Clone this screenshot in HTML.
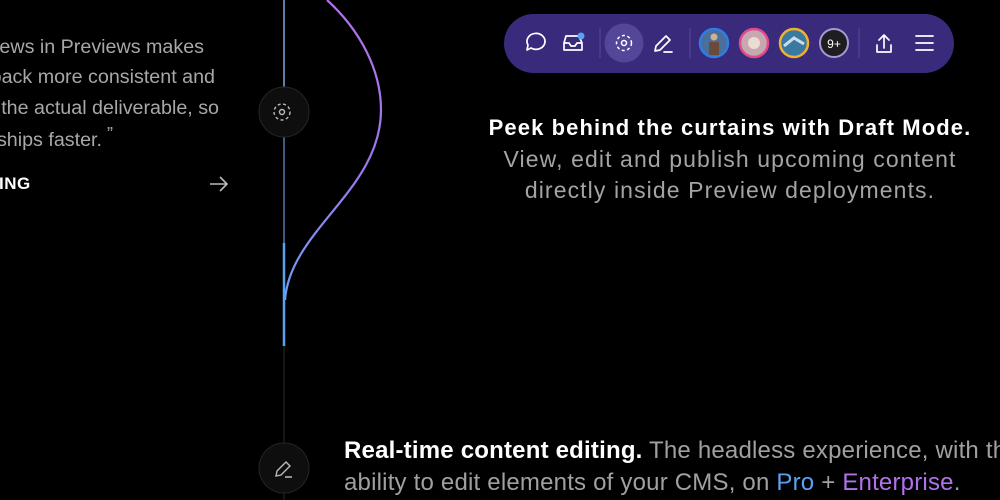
<!DOCTYPE html>
<html><head><meta charset="utf-8"><style>
*{margin:0;padding:0;box-sizing:border-box}
body{width:1000px;height:500px;background:#000;overflow:hidden;position:relative;font-family:"Liberation Sans",sans-serif}
.a{position:absolute;white-space:nowrap}
.q{color:#a8a8a8;font-size:19.7px;width:300px;text-align:right}
.c{color:#a4a4a4;font-size:23px;letter-spacing:1.1px;text-align:center;width:560px;left:450px}
.bt{left:344px;font-size:24px;color:#a0a0a0;letter-spacing:0.2px}
</style></head><body>
<div class="a q" style="left:-96px;top:36px">views in Previews makes</div>
<div class="a q" style="left:-85px;top:66px">back more consistent and</div>
<div class="a q" style="left:-81px;top:97px">the actual deliverable, so</div>
<div class="a q" style="left:-198px;top:129px">ships faster.</div>
<div class="a" style="left:107px;top:124px;color:#aaa;font-size:18px">”</div>
<div class="a" style="left:-1px;top:174px;color:#fff;font-weight:bold;font-size:17px;letter-spacing:0.5px">ING</div>
<svg class="a" style="left:0;top:0" width="1000" height="500">
<line x1="284" y1="0" x2="284" y2="500" stroke="#1c1c1c" stroke-width="1.5"/>
<line x1="284" y1="0" x2="284" y2="90" stroke="#5c7fa8" stroke-width="2"/>
<line x1="284" y1="134" x2="284" y2="245" stroke="#3d5a80" stroke-width="2"/>
<line x1="284" y1="243" x2="284" y2="346" stroke="#5aa2f0" stroke-width="2.5"/>
<defs><linearGradient id="g" x1="0" y1="0" x2="0" y2="1"><stop offset="0" stop-color="#b072ea"/><stop offset="0.6" stop-color="#9a78ee"/><stop offset="1" stop-color="#6aa0f2"/></linearGradient></defs>
<path d="M327 0 C 360 30, 381 70, 381 110 C 381 190, 290 230, 285 300" fill="none" stroke="url(#g)" stroke-width="2.2"/>
<path d="M210 184 H227 M220 177 L227 184 L220 191" fill="none" stroke="#bbb" stroke-width="1.6"/>
<circle cx="284" cy="112" r="25" fill="#0e0e0e" stroke="#262626"/>
<circle cx="282" cy="112" r="8" fill="none" stroke="#bbb" stroke-width="1.4" stroke-dasharray="3 2.5"/>
<circle cx="282" cy="112" r="2.5" fill="none" stroke="#bbb" stroke-width="1.4"/>
<circle cx="284" cy="468" r="25" fill="#0e0e0e" stroke="#262626"/>
<path d="M276 476 L277 471 L286 462 L290 466 L281 475 Z M285 477 H292" fill="none" stroke="#bbb" stroke-width="1.4"/>
<rect x="504" y="14" width="450" height="59" rx="29.5" fill="#3a2a7c"/>
<g fill="none" stroke="#fff" stroke-width="1.7" stroke-linecap="round" stroke-linejoin="round">
<path d="M527 50 L528 45 A9 8 0 1 1 531 48 Z"/>
<path d="M564 43 L566 36 H579 L582 43 V50 H564 Z M564 43 H569 L571 46 H575 L577 43 H582"/>
<path d="M655 51 L656 46 L666 36 L670 40 L660 50 Z M664 52 H672"/>
<path d="M884 35 V48 M879 40 L884 35 L889 40 M877 45 V52 H891 V45"/>
<path d="M916 36 H933 M916 43 H933 M916 50 H933"/>
</g>
<circle cx="581" cy="36" r="3.5" fill="#5aa2f0"/>
<line x1="600" y1="28" x2="600" y2="58" stroke="#55489a"/>
<line x1="690" y1="28" x2="690" y2="58" stroke="#55489a"/>
<line x1="859" y1="28" x2="859" y2="58" stroke="#55489a"/>
<circle cx="624" cy="43" r="19.5" fill="#54479a"/>
<circle cx="624" cy="43" r="7.5" fill="none" stroke="#fff" stroke-width="1.5" stroke-dasharray="3 2.5"/>
<circle cx="624" cy="43" r="2.5" fill="none" stroke="#fff" stroke-width="1.5"/>
<circle cx="714" cy="43" r="14" fill="#4a6f9a" stroke="#2f7de0" stroke-width="2.5"/>
<rect x="709" y="42" width="10" height="13" fill="#6a4a3a"/>
<circle cx="714" cy="37" r="3.5" fill="#d0b090"/>
<circle cx="754" cy="43" r="14" fill="#c8a8b0" stroke="#e04a8a" stroke-width="2.5"/>
<circle cx="754" cy="43" r="6" fill="#eadcd0"/>
<circle cx="794" cy="43" r="14" fill="#3a7aa0" stroke="#f0b030" stroke-width="2.5"/>
<path d="M784 46 L794 38 L804 44" stroke="#cde" stroke-width="3" fill="none"/>
<circle cx="834" cy="43" r="14" fill="#1e1e22" stroke="#a898d0" stroke-width="2"/>
<text x="834" y="48" fill="#fff" font-size="12" text-anchor="middle" font-family="Liberation Sans">9+</text>
</svg>
<div class="a c" style="top:115px;color:#fff;font-weight:bold;font-size:22px">Peek behind the curtains with Draft Mode.</div>
<div class="a c" style="top:146px">View, edit and publish upcoming content</div>
<div class="a c" style="top:177px">directly inside Preview deployments.</div>
<div class="a bt" style="top:437px"><b style="color:#fff">Real-time content editing.</b> The headless experience, with the</div>
<div class="a bt" style="top:469px">ability to edit elements of your CMS, on <span style="color:#5aa2f0">Pro</span> + <span style="color:#b072ea">Enterprise</span>.</div>
</body></html>
